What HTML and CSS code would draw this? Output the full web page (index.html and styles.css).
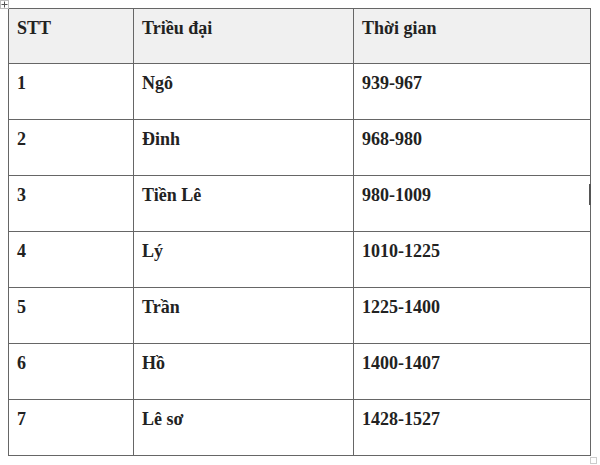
FILE: index.html
```html
<!DOCTYPE html>
<html>
<head>
<meta charset="utf-8">
<link rel="stylesheet" href="styles.css">
</head>
<body>
<div class="wrap">
  <svg class="move-handle" width="9" height="9" viewBox="0 0 9 9">
    <rect x="0.5" y="0.5" width="8" height="8" fill="#fff" stroke="#bbb"/>
    <path d="M4.5 1.5v6M1.5 4.5h6" stroke="#555" stroke-width="1"/>
  </svg>
  <table class="dyn">
    <colgroup>
      <col class="c1"><col class="c2"><col class="c3">
    </colgroup>
    <thead>
      <tr><th>STT</th><th>Triều đại</th><th>Thời gian</th></tr>
    </thead>
    <tbody>
      <tr><td>1</td><td>Ngô</td><td>939-967</td></tr>
      <tr><td>2</td><td>Đinh</td><td>968-980</td></tr>
      <tr><td>3</td><td>Tiền Lê</td><td>980-1009</td></tr>
      <tr><td>4</td><td>Lý</td><td>1010-1225</td></tr>
      <tr><td>5</td><td>Trần</td><td>1225-1400</td></tr>
      <tr><td>6</td><td>Hồ</td><td>1400-1407</td></tr>
      <tr><td>7</td><td>Lê sơ</td><td>1428-1527</td></tr>
    </tbody>
  </table>
  <span class="resize-bar"></span>
  <span class="resize-box"></span>
</div>
</body>
</html>
```
FILE: styles.css
```css
html, body {
  margin: 0;
  padding: 0;
  background: #fff;
}
.wrap {
  position: relative;
  width: 600px;
  height: 465px;
  padding: 8px 0 0 8px;
  box-sizing: border-box;
}
.move-handle {
  position: absolute;
  left: 0;
  top: 0;
}
.dyn {
  border-collapse: collapse;
  table-layout: fixed;
  width: 582px;
  font-family: "Liberation Serif", "Times New Roman", serif;
  font-size: 18px;
  font-weight: bold;
  color: #222;
}
.c1 { width: 125px; }
.c2 { width: 220px; }
.c3 { width: 237px; }
.dyn th, .dyn td {
  border: 1px solid #666;
  height: 56px;
  box-sizing: border-box;
  padding: 9px 8px 0 8px;
  vertical-align: top;
  text-align: left;
  font-weight: bold;
}
.dyn thead tr:first-child th {
  height: 55px;
}
.dyn th {
  background: #f0f0f0;
}
.resize-bar {
  position: absolute;
  left: 589px;
  top: 184px;
  width: 2px;
  height: 21px;
  background: #555;
}
.resize-box {
  position: absolute;
  left: 590px;
  top: 457px;
  width: 5px;
  height: 5px;
  border: 1px solid #ccc;
  background: #fff;
}
```
